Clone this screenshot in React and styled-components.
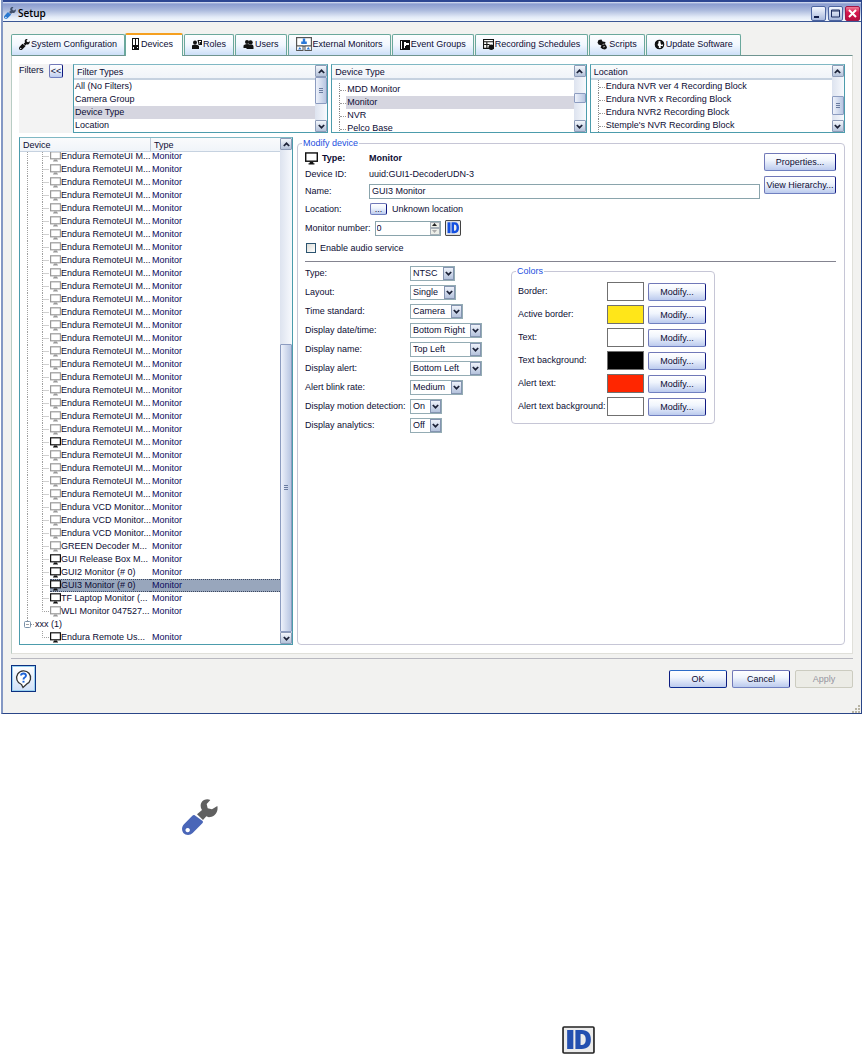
import { useState } from "react";
import styled, { createGlobalStyle, css } from "styled-components";

const FILTER_TYPES = ["All (No Filters)", "Camera Group", "Device Type", "Location"];
const DEVICE_TYPES = ["MDD Monitor", "Monitor", "NVR", "Pelco Base"];
const LOCATIONS = [
  "Endura NVR ver 4 Recording Block",
  "Endura NVR x Recording Block",
  "Endura NVR2 Recording Block",
  "Stemple's NVR Recording Block",
];

const offline = (name) => ({ name, online: false });
const online = (name) => ({ name, online: true });

const DEVICES = [
  ...Array.from({ length: 22 }, () => offline("Endura RemoteUI M...")),
  online("Endura RemoteUI M..."),
  ...Array.from({ length: 4 }, () => offline("Endura RemoteUI M...")),
  ...Array.from({ length: 3 }, () => offline("Endura VCD Monitor...")),
  offline("GREEN Decoder M..."),
  online("GUI Release Box M..."),
  online("GUI2 Monitor (# 0)"),
  online("GUI3 Monitor (# 0)"),
  online("TF Laptop Monitor (..."),
  offline("WLI Monitor 047527..."),
];

const SETTINGS = [
  { id: "type", label: "Type:", width: 45, options: ["NTSC", "PAL"] },
  { id: "layout", label: "Layout:", width: 46, options: ["Single", "Quad"] },
  { id: "time", label: "Time standard:", width: 53, options: ["Camera", "Local"] },
  { id: "date", label: "Display date/time:", width: 72, options: ["Bottom Right", "Off"] },
  { id: "name", label: "Display name:", width: 72, options: ["Top Left", "Off"] },
  { id: "alert", label: "Display alert:", width: 72, options: ["Bottom Left", "Off"] },
  { id: "blink", label: "Alert blink rate:", width: 53, options: ["Medium", "Slow", "Fast"] },
  { id: "motion", label: "Display motion detection:", width: 32, options: ["On", "Off"] },
  { id: "analytics", label: "Display analytics:", width: 32, options: ["Off", "On"] },
];

const COLORS = [
  { label: "Border:", value: "#ffffff" },
  { label: "Active border:", value: "#ffe619" },
  { label: "Text:", value: "#ffffff" },
  { label: "Text background:", value: "#000000" },
  { label: "Alert text:", value: "#ff2600" },
  { label: "Alert text background:", value: "#ffffff" },
];

/* ---------- icons ---------- */

function Wrench({ size, handle = "#111", head = "#111" }) {
  return (
    <svg width={size} height={size} viewBox="35 27 108 108" aria-hidden="true">
      <path
        fill={head}
        d="M80 73 95 60C88 50 90 36 101 30 108 27 114 27 120 30L109 42 112 55 125 58 141 48C144 62 137 76 124 80 117 82 112 82 108 79L98 90Z"
      />
      <path
        fill={handle}
        fillRule="evenodd"
        d="M72 75 97 93Q99 97 96 100L67 129C59 137 46 136 39 129 33 121 34 110 41 103L66 77Q69 74 72 75ZM52 114a6.500 6.500 0 1 0 .1 0Z"
      />
    </svg>
  );
}

function IdIcon({ width, height, blue = "#2450b0" }) {
  return (
    <svg width={width} height={height} viewBox="0 0 32 28" preserveAspectRatio="none" aria-hidden="true">
      <rect x="1" y="1" width="30" height="26" rx="1" fill="#ececec" stroke="#222" strokeWidth="1.600" />
      <path fill={blue} d="M5 4h6v19H5z" />
      <path fill={blue} fillRule="evenodd" d="M13 4h6c6 0 9 3.500 9 9.500s-3 9.500-9 9.500h-6ZM18 8v11c4 0 5-2 5-5.500S22 8 18 8Z" />
    </svg>
  );
}

function MonitorIcon({ size = 11, color = "#111" }) {
  return (
    <svg width={size} height={size} viewBox="0 0 11 11" aria-hidden="true">
      <rect x=".6" y=".8" width="9.800" height="7" fill="#fff" stroke={color} strokeWidth="1.200" />
      <path d="M4 8.500h3v1h1v1H3v-1h1z" fill={color} />
    </svg>
  );
}

function DeviceIcon() {
  return (
    <svg width="8" height="12" viewBox="0 0 8 12" aria-hidden="true">
      <path fill="#111" d="M0 0h7v12H0z" />
      <path fill="#fff" d="M1 1h2v6H1zM4 1h2v6H4zM1 9h1v2H1zM5 9h1v1H5z" />
    </svg>
  );
}

function RolesIcon() {
  return (
    <svg width="10" height="11" viewBox="0 0 10 11" aria-hidden="true">
      <circle cx="3" cy="3.500" r="2" fill="#111" />
      <path fill="#111" d="M0 10V7q0-1.500 3-1.500T7 7v3Z" />
      <path fill="#111" d="M5.500 1H10v5H6.500Z" />
      <path d="M7 2.500h2M7 4h1" stroke="#fff" />
    </svg>
  );
}

function UsersIcon() {
  return (
    <svg width="11" height="11" viewBox="0 0 10 11" aria-hidden="true">
      <circle cx="3.500" cy="3" r="2" fill="#111" />
      <circle cx="7" cy="3.500" r="2.200" fill="#111" />
      <path fill="#111" d="M0 9V6.500Q1 5 3.500 5t3 1L8.500 5.500q1.500.5 1.500 2V10H3V9Z" />
    </svg>
  );
}

function ExternalIcon() {
  return (
    <svg width="16" height="15" viewBox="0 0 16 15" aria-hidden="true">
      <rect x=".6" y=".6" width="14.800" height="8.500" fill="#fff" stroke="#555" strokeWidth="1.200" />
      <rect x=".6" y="9" width="6.400" height="4.500" fill="#fff" stroke="#555" />
      <rect x="9" y="9" width="6.400" height="4.500" fill="#fff" stroke="#555" />
      <path fill="#2a78d8" d="M6.800 1.500h2.400v3h1.600V7H5.200V4.500h1.600zM2 12.500 3.800 10l1.800 2.500zM10.500 12.500l1.800-2.500 1.800 2.500z" />
    </svg>
  );
}

function EventIcon() {
  return (
    <svg width="10" height="10" viewBox="0 0 10 10" aria-hidden="true">
      <path fill="#111" d="M0 0h10v10H0z" />
      <path fill="#fff" d="M1 1h1v8H1zM4 2h2v1h3v2H6v1H5v2H4z" />
    </svg>
  );
}

function ScheduleIcon() {
  return (
    <svg width="11" height="11" viewBox="0 0 10 10" aria-hidden="true">
      <path fill="#fff" stroke="#111" d="M.5.5h9v8h-9z" />
      <path stroke="#111" d="M0 2.500h10M1 5h5M3.500 3v6" fill="none" />
      <circle cx="7.500" cy="7.500" r="2.500" fill="#111" />
    </svg>
  );
}

function ScriptIcon() {
  return (
    <svg width="11" height="11" viewBox="0 0 10 11" aria-hidden="true">
      <path fill="#111" d="M1 1l3-.5 1 2 3 .5-.5 2L9 7l.5 2-2 1.500L5 10 3 8.500l1-2-3-1L0 3.500Z" />
      <path stroke="#fff" strokeWidth=".6" d="M5 5.500l2-.5M5.500 8l2-.5" />
    </svg>
  );
}

function UpdateIcon() {
  return (
    <svg width="11" height="11" viewBox="0 0 10 11" aria-hidden="true">
      <circle cx="5" cy="5.500" r="4.200" fill="#fff" stroke="#111" strokeWidth="1.200" />
      <path fill="#111" d="M1 3l3-2v3l-1 2 1.500 1.500L4 10 1 8ZM6 1l3 2v2L7 6 6 4ZM6 7h2.500L7 9.500Z" />
    </svg>
  );
}

function Chevron({ up }) {
  return (
    <svg width="7" height="5" viewBox="0 0 7 5" aria-hidden="true">
      <path d={up ? "M.8 4 3.500 1.300 6.200 4" : "M.8 1 3.500 3.700 6.200 1"} fill="none" stroke="#1c2238" strokeWidth="1.700" />
    </svg>
  );
}

function HelpIcon() {
  return (
    <svg width="17" height="20" viewBox="0 0 17 20" aria-hidden="true">
      <path d="M6.500 15.500a7 7 0 1 1 5-.3L8 18.500Z" fill="#fff" stroke="#333" strokeWidth="1.300" />
      <path d="M6 6.500q.2-2 2.500-2T11 6.600q0 1.200-1.300 1.900-1.200.6-1.200 1.900" fill="none" stroke="#1e64d8" strokeWidth="1.900" />
      <path d="M7.500 11.800h2v1.800h-2z" fill="#1e64d8" />
    </svg>
  );
}

function TreeGuide({ last, root }) {
  return (
    <Guide width="30" height="13" viewBox="0 0 30 13" aria-hidden="true">
      {!root && <path d="M7.500 0V13" />}
      <path d={last ? "M22.500 0V6.500H29" : "M22.500 0V13M22.500 6.500H29"} />
    </Guide>
  );
}

const TABS = [
  { label: "System Configuration", icon: <Wrench size={11} /> },
  { label: "Devices", icon: <DeviceIcon /> },
  { label: "Roles", icon: <RolesIcon /> },
  { label: "Users", icon: <UsersIcon /> },
  { label: "External Monitors", icon: <ExternalIcon /> },
  { label: "Event Groups", icon: <EventIcon /> },
  { label: "Recording Schedules", icon: <ScheduleIcon /> },
  { label: "Scripts", icon: <ScriptIcon /> },
  { label: "Update Software", icon: <UpdateIcon /> },
];

/* ---------- parts ---------- */

function Scrollbar({ before, thumb, after, grip }) {
  return (
    <Bar>
      <BarButton type="button" aria-label="Scroll up">
        <Chevron up />
      </BarButton>
      <Track $before={before} $thumb={thumb} $after={after}>
        <Thumb>{grip && <Grip />}</Thumb>
      </Track>
      <BarButton type="button" aria-label="Scroll down">
        <Chevron />
      </BarButton>
    </Bar>
  );
}

function FilterList({ title, items, selected, tree, shifted, scroll }) {
  return (
    <Panel>
      <PanelMain>
        <PanelHeader>{title}</PanelHeader>
        <List $tree={tree} $shifted={shifted}>
          {items.map((item) => (
            <li key={item}>
              <ItemLabel $selected={item === selected}>{item}</ItemLabel>
            </li>
          ))}
        </List>
      </PanelMain>
      <Scrollbar {...scroll} />
    </Panel>
  );
}

function Select({ id, width, options }) {
  return (
    <SelectBox $width={width}>
      <select id={id}>
        {options.map((o) => (
          <option key={o}>{o}</option>
        ))}
      </select>
      <span>
        <Chevron />
      </span>
    </SelectBox>
  );
}

export default function App() {
  const [tab, setTab] = useState("Devices");
  const [selected, setSelected] = useState("GUI3 Monitor (# 0)");

  return (
    <>
      <GlobalStyle />
      <Window>
        <TitleBar>
          <Wrench size={12} handle="#2a78d0" head="#40506c" />
          <h1>Setup</h1>
          <WindowButton type="button" aria-label="Minimize">
            <svg width="11" height="11">
              <path d="M1 8h5v2H1z" fill="#111c48" />
            </svg>
          </WindowButton>
          <WindowButton type="button" aria-label="Maximize">
            <svg width="11" height="11">
              <path d="M1.500 2h8v7h-8zM1 3h9" fill="none" stroke="#1c2c60" />
            </svg>
          </WindowButton>
          <WindowButton type="button" aria-label="Close" $close>
            <svg width="11" height="11">
              <path d="M2 2l7 7M9 2l-7 7" stroke="#fff" strokeWidth="2" />
            </svg>
          </WindowButton>
        </TitleBar>

        <Client>
          <TabStrip role="tablist">
            {TABS.map(({ label, icon }) => (
              <Tab
                key={label}
                type="button"
                role="tab"
                aria-selected={tab === label}
                $active={tab === label}
                onClick={() => setTab(label)}
              >
                {icon}
                {label}
              </Tab>
            ))}
          </TabStrip>

          <TabPanel>
            <Filters>
              <FiltersLabel>
                <span>Filters</span>
                <CollapseButton type="button">&lt;&lt;</CollapseButton>
              </FiltersLabel>
              <FilterGrid>
                <FilterList
                  title="Filter Types"
                  items={FILTER_TYPES}
                  selected="Device Type"
                  scroll={{ before: 0, thumb: 26, after: 16, grip: true }}
                />
                <FilterList
                  title="Device Type"
                  items={DEVICE_TYPES}
                  selected="Monitor"
                  tree
                  shifted
                  scroll={{ before: 16, thumb: 9, after: 17 }}
                />
                <FilterList
                  title="Location"
                  items={LOCATIONS}
                  tree
                  scroll={{ before: 19, thumb: 18, after: 5, grip: true }}
                />
              </FilterGrid>
            </Filters>

            <Workspace>
              <Panel>
                <DeviceTable>
                  <thead>
                    <tr>
                      <th>Device</th>
                      <th>Type</th>
                    </tr>
                  </thead>
                  <tbody>
                    {DEVICES.map(({ name, online: isOnline }, i) => (
                      <DeviceRow key={i} $selected={name === selected} onClick={() => setSelected(name)}>
                        <td>
                          <TreeGuide last={i === DEVICES.length - 1} />
                          <DeviceName>
                            <MonitorIcon color={isOnline ? "#111" : "#999"} />
                            {name}
                          </DeviceName>
                        </td>
                        <td>Monitor</td>
                      </DeviceRow>
                    ))}
                    <DeviceRow>
                      <td>
                        <Guide width="15" height="13" viewBox="0 0 15 13" aria-hidden="true">
                          <path d="M7.500 0V3M11 6.500H15" />
                          <rect x="4.500" y="3.500" width="6" height="6" rx="1" />
                          <path d="M6 6.500H9" strokeDasharray="none" />
                        </Guide>
                        <DeviceName>xxx (1)</DeviceName>
                      </td>
                      <td />
                    </DeviceRow>
                    <DeviceRow>
                      <td>
                        <TreeGuide root last />
                        <DeviceName>
                          <MonitorIcon />
                          Endura Remote Us...
                        </DeviceName>
                      </td>
                      <td>Monitor</td>
                    </DeviceRow>
                  </tbody>
                </DeviceTable>
                <Scrollbar before={194} thumb={289} after={0} grip />
              </Panel>

              <Group>
                <legend>Modify device</legend>
                <Identity>
                  <Fields>
                    <Field $height={16}>
                      <TypeLabel>
                        <MonitorIcon size={13} />
                        Type:
                      </TypeLabel>
                      <b>Monitor</b>
                    </Field>
                    <Field $height={16}>
                      <span>Device ID:</span>
                      <span>uuid:GUI1-DecoderUDN-3</span>
                    </Field>
                    <Field $height={18}>
                      <label htmlFor="device-name">Name:</label>
                      <TextInput id="device-name" defaultValue="GUI3 Monitor" />
                    </Field>
                    <Field $height={18}>
                      <span>Location:</span>
                      <Inline>
                        <BrowseButton type="button">...</BrowseButton>
                        Unknown location
                      </Inline>
                    </Field>
                    <NumberField>
                      <label htmlFor="monitor-number">Monitor number:</label>
                      <Spinner>
                        <input id="monitor-number" type="number" defaultValue="0" />
                        <Steppers>
                          <button type="button" aria-label="Increase">
                            <svg width="5" height="3">
                              <path d="M0 3h5L2.500 0z" fill="#222" />
                            </svg>
                          </button>
                          <button type="button" aria-label="Decrease">
                            <svg width="5" height="3">
                              <path d="M0 0h5L2.500 3z" fill="#aaa" />
                            </svg>
                          </button>
                        </Steppers>
                      </Spinner>
                      <IdButton type="button" aria-label="Identify monitor">
                        <IdIcon width={16} height={16} blue="#1450e0" />
                      </IdButton>
                    </NumberField>
                    <CheckField>
                      <input type="checkbox" />
                      Enable audio service
                    </CheckField>
                  </Fields>
                  <Actions>
                    <Button type="button">Properties...</Button>
                    <Button type="button">View Hierarchy...</Button>
                  </Actions>
                </Identity>
                <Rule />
                <Display>
                  <div>
                    {SETTINGS.map(({ id, label, width, options }) => (
                      <SettingRow key={id}>
                        <label htmlFor={id}>{label}</label>
                        <Select id={id} width={width} options={options} />
                      </SettingRow>
                    ))}
                  </div>
                  <ColorGroup>
                    <legend>Colors</legend>
                    {COLORS.map(({ label, value }) => (
                      <ColorRow key={label}>
                        <span>{label}</span>
                        <Swatch $color={value} />
                        <Button type="button">Modify...</Button>
                      </ColorRow>
                    ))}
                  </ColorGroup>
                </Display>
              </Group>
            </Workspace>
          </TabPanel>

          <Footer>
            <HelpButton type="button" aria-label="Help">
              <HelpIcon />
            </HelpButton>
            <Button type="button" $primary>
              OK
            </Button>
            <Button type="button">Cancel</Button>
            <Button type="button" disabled>
              Apply
            </Button>
          </Footer>
          <ResizeGrip width="8" height="8" viewBox="0 0 8 8" aria-hidden="true">
            <path d="M6 0h2v2H6zM3 3h2v2H3zM6 3h2v2H6zM0 6h2v2H0zM3 6h2v2H3zM6 6h2v2H6z" fill="#b8b4a4" />
          </ResizeGrip>
        </Client>
      </Window>

      <Figures>
        <Wrench size={36} handle="#4a66b8" head="#606060" />
        <IdIcon width={33} height={28} />
      </Figures>
    </>
  );
}

/* ---------- styles ---------- */

const GlobalStyle = createGlobalStyle`
  * {
    box-sizing: border-box;
  }
  body {
    margin: 0;
    background: #fff;
    color: #0c0c34;
    font: 9px/13px "Liberation Sans", Arial, sans-serif;
  }
  button, input, select {
    font: inherit;
    color: inherit;
    margin: 0;
    padding: 0;
  }
  svg {
    display: block;
    flex: none;
  }
`;

const Window = styled.main`
  margin: 0 1px;
  border: solid #2a4688;
  border-width: 0 1px 1px 2px;
  border-left-color: #8498c4;
  background: #f2f2f0;
`;

const TitleBar = styled.header`
  display: flex;
  align-items: center;
  gap: 2px;
  height: 22px;
  padding: 3px 1px 0 1px;
  border-top: 2px solid #2c4692;
  border-bottom: 1px solid #3a5694;
  background: linear-gradient(#dfe6f5 0, #8a9ccf 2px, #a9b8dc 8px, #e2eaf7 15px, #f4f8fd);
  > h1 {
    flex: 1;
    margin: 0;
    font: 600 10px/14px "Open Sans", "Noto Sans", sans-serif;
    color: #000;
  }
`;

const WindowButton = styled.button`
  display: grid;
  place-items: center;
  width: 15px;
  height: 15px;
  border: 1px solid #4c64a0;
  border-radius: 2px;
  background: ${(p) =>
    p.$close ? "linear-gradient(#f08098, #d81850 40%, #b80c40)" : "linear-gradient(#f4f8ff, #a8b8dc)"};
  ${(p) => p.$close && "border-color: #a01848;"}
`;

const Client = styled.div`
  padding: 11px 8px 0 8px;
`;

const TabStrip = styled.div`
  display: flex;
  align-items: flex-end;
  gap: 1px;
`;

const Tab = styled.button`
  display: flex;
  align-items: center;
  gap: 1px;
  height: 21px;
  padding: 0 7px 1px;
  border: 1px solid #6aa89c;
  border-bottom: none;
  border-radius: 2px 2px 0 0;
  background: linear-gradient(#fdfeff, #f2f7fe 50%, #ccdff8);
  white-space: nowrap;
  ${(p) =>
    p.$active &&
    css`
      position: relative;
      height: 23px;
      margin: 0 0 -1px -1px;
      padding: 0 9px 3px 6px;
      border-top: 2px solid #f5a020;
      background: #fff;
    `}
`;

const TabPanel = styled.section`
  padding: 8px 7px;
  border: 1px solid #e0e0da;
  border-top-color: #6f9490;
  border-left-color: #b8ccc4;
  background: #fff;
`;

const Filters = styled.div`
  display: flex;
`;

const FiltersLabel = styled.div`
  display: flex;
  align-items: flex-start;
  justify-content: space-between;
  width: 54px;
  padding-right: 10px;
  background: #f3f3f3;
`;

const buttonFace = css`
  border: 1px solid #4a5aa8;
  border-color: #7078b8 #101880 #7080c0 #7078b8;
  border-radius: 2px;
  background: linear-gradient(#fff, #f0f5fd 40%, #bccbee);
`;

const CollapseButton = styled.button`
  ${buttonFace}
  width: 14px;
  height: 14px;
  line-height: 10px;
`;

const FilterGrid = styled.div`
  flex: 1;
  display: grid;
  grid-template-columns: repeat(3, minmax(0, 1fr));
  gap: 3px;
`;

const Panel = styled.div`
  display: flex;
  min-width: 0;
  border: 1px solid #4c9cac;
  border-top-color: #80b8c4;
  background: #fff;
`;

const PanelMain = styled.div`
  flex: 1;
  min-width: 0;
`;

const header = css`
  height: 15px;
  padding: 1px 3px 0;
  border-bottom: 2px solid #c6d2e0;
  background: linear-gradient(#fafbfc, #f0f4f9);
  font-weight: normal;
  text-align: left;
`;

const PanelHeader = styled.div`
  ${header}
`;

const ItemLabel = styled.div`
  flex: 1;
  padding-left: 1px;
  background: ${(p) => (p.$selected ? "#d6d6e0" : "none")};
`;

const List = styled.ul`
  height: 52px;
  margin: 0;
  padding: ${(p) => (p.$shifted ? "3px 0 0" : "0")};
  list-style: none;
  overflow: hidden;
  > li {
    display: flex;
    height: 13px;
  }
  ${(p) =>
    p.$tree &&
    css`
      > li {
        margin-left: 7px;
        border-left: 1px dotted #888;
      }
      > li::before {
        content: "";
        width: 6px;
        height: 7px;
        border-bottom: 1px dotted #999;
      }
    `}
`;

const Bar = styled.div`
  display: flex;
  flex-direction: column;
  width: 12px;
  background: linear-gradient(90deg, #dde3ef, #f7f9fd);
`;

const BarButton = styled.button`
  display: grid;
  place-items: center;
  height: 12px;
  border: 1px solid #8e9cb8;
  border-radius: 1px;
  background: linear-gradient(#f4f7fc, #b4c2da);
`;

const Track = styled.div`
  flex: 1;
  display: grid;
  grid-template-rows: ${(p) => `${p.$before}fr ${p.$thumb}fr ${p.$after}fr`};
`;

const Thumb = styled.div`
  grid-row: 2;
  display: grid;
  place-items: center;
  border: 1px solid #8c9cc0;
  border-radius: 1px;
  background: linear-gradient(90deg, #eef2fb, #b8c6e2);
`;

const Grip = styled.i`
  width: 4px;
  height: 5px;
  border: solid #6a7ca0;
  border-width: 1px 0;
  background: linear-gradient(transparent 1px, #6a7ca0 1px, #6a7ca0 2px, transparent 2px);
`;

const Workspace = styled.div`
  display: grid;
  grid-template-columns: 274px minmax(0, 1fr);
  gap: 4px;
  margin-top: 4px;
`;

const DeviceTable = styled.table`
  flex: 1;
  display: block;
  thead,
  tbody {
    display: block;
  }
  tbody {
    overflow: hidden;
  }
  tr {
    display: grid;
    grid-template-columns: 130px minmax(0, 1fr);
  }
  td {
    display: flex;
    padding: 0;
    white-space: nowrap;
  }
  th {
    ${header}
    height: 14px;
    border-bottom-width: 1px;
  }
  th + th {
    border-left: 1px solid #c0cad8;
  }
  tbody tr:first-child {
    margin-top: -2px;
  }
`;

const Guide = styled.svg`
  fill: none;
  stroke: #a0a0a0;
  stroke-dasharray: 1 1;
  > rect {
    stroke: #7890a8;
    stroke-dasharray: none;
  }
`;

const DeviceName = styled.div`
  flex: 1;
  display: flex;
  align-items: center;
`;

const DeviceRow = styled.tr`
  height: 13px;
  > td + td {
    padding-left: 2px;
    color: #0a0a5c;
  }
  ${(p) =>
    p.$selected &&
    css`
      ${DeviceName}, > td + td {
        border: dotted #3c4860;
        border-width: 1px 0;
        background: #98a6bc;
        line-height: 11px;
      }
    `}
`;

const groupFrame = css`
  min-width: 0;
  margin: 0;
  border: 1px solid #c6c6d6;
  border-radius: 4px;
  > legend {
    padding: 0 1px;
    line-height: 12px;
    color: #1c50e0;
  }
`;

const Group = styled.fieldset`
  ${groupFrame}
  padding: 1px 8px 8px 7px;
  > legend {
    margin-left: -3px;
  }
`;

const Identity = styled.div`
  display: flex;
  gap: 4px;
`;

const Fields = styled.div`
  flex: 1;
`;

const Field = styled.div`
  display: grid;
  grid-template-columns: 64px minmax(0, 1fr);
  align-items: center;
  height: ${(p) => p.$height}px;
`;

const Inline = styled.div`
  display: flex;
  align-items: center;
  gap: 5px;
  padding-left: 1px;
`;

const TypeLabel = styled.b`
  display: flex;
  align-items: center;
  gap: 4px;
`;

const TextInput = styled.input`
  width: 100%;
  height: 15px;
  padding: 0 2px;
  border: 1px solid #8aa4ac;
  background: #fff;
`;

const BrowseButton = styled.button`
  ${buttonFace}
  width: 17px;
  height: 12px;
  line-height: 8px;
`;

const NumberField = styled.div`
  display: flex;
  align-items: center;
  gap: 4px;
  height: 20px;
`;

const Spinner = styled.div`
  display: flex;
  width: 66px;
  height: 15px;
  border: 1px solid #8aa4ac;
  background: #fff;
  > input {
    flex: 1;
    min-width: 0;
    padding-left: 1px;
    border: none;
    background: none;
    appearance: textfield;
  }
  > input::-webkit-inner-spin-button {
    display: none;
  }
`;

const Steppers = styled.div`
  display: grid;
  width: 10px;
  > button {
    display: grid;
    place-items: center;
    border: 1px solid #a8b0b8;
    background: #eceee8;
  }
`;

const IdButton = styled.button`
  border: none;
  background: none;
`;

const CheckField = styled.label`
  display: flex;
  align-items: center;
  gap: 4px;
  height: 20px;
  padding-left: 1px;
  > input {
    appearance: none;
    width: 10px;
    height: 10px;
    border: 1px solid #2c5470;
    background: linear-gradient(135deg, #dcdcd6, #fff);
  }
  > input:checked {
    background: #2c5470;
  }
`;

const Actions = styled.div`
  display: flex;
  flex-direction: column;
  gap: 5px;
  width: 72px;
  padding-top: 3px;
`;

const Button = styled.button`
  ${buttonFace}
  height: 18px;
  line-height: 14px;
  white-space: nowrap;
  ${(p) => p.$primary && "border-color: #2c6cc8 #0c1c80 #0c2c90 #0c1c80;"}
  &:disabled {
    border-color: #ccccc0;
    background: #ecece6;
    color: #9494a0;
  }
`;

const Rule = styled.hr`
  margin: 3px 0 2px;
  border: none;
  border-top: 1px solid #848490;
`;

const Display = styled.div`
  display: flex;
  align-items: flex-start;
`;

const SettingRow = styled.div`
  display: grid;
  grid-template-columns: 105px 101px;
  align-items: center;
  height: 19px;
`;

const SelectBox = styled.div`
  display: flex;
  width: ${(p) => p.$width}px;
  height: 15px;
  border: 1px solid #94acb4;
  background: #fff;
  > select {
    flex: 1;
    min-width: 0;
    padding-left: 2px;
    border: none;
    background: none;
    appearance: none;
  }
  > span {
    display: grid;
    place-items: center;
    width: 11px;
    border: 1px solid #8494b0;
    background: linear-gradient(#eef2fa, #b4c2dc);
    pointer-events: none;
  }
`;

const ColorGroup = styled.fieldset`
  ${groupFrame}
  margin-top: 1px;
  padding: 3px 8px 5px 6px;
  > legend {
    margin-left: -2px;
  }
`;

const ColorRow = styled.div`
  display: grid;
  grid-template-columns: 85px 37px 58px;
  column-gap: 4px;
  align-items: center;
  height: 23px;
  white-space: nowrap;
`;

const Swatch = styled.i`
  height: 19px;
  border: 1px solid #707070;
  background: ${(p) => p.$color};
`;

const Footer = styled.footer`
  display: grid;
  grid-template-columns: 1fr 58px 58px 58px;
  align-items: center;
  gap: 5px;
  margin-top: 4px;
  padding-top: 6px;
  border-top: 1px solid #b8b8c0;
`;

const HelpButton = styled.button`
  display: grid;
  place-items: center;
  width: 25px;
  height: 27px;
  border: 1px solid #0c3080;
  box-shadow: inset 0 0 0 1px #98d0f0;
  background: linear-gradient(#fff, #d0e0f8);
`;

const ResizeGrip = styled.svg`
  margin: 13px -7px 0 auto;
`;

const Figures = styled.div`
  display: grid;
  justify-items: start;
  row-gap: 191px;
  padding: 85px 0 0 182px;
  > :last-child {
    margin-left: 380px;
  }
`;
